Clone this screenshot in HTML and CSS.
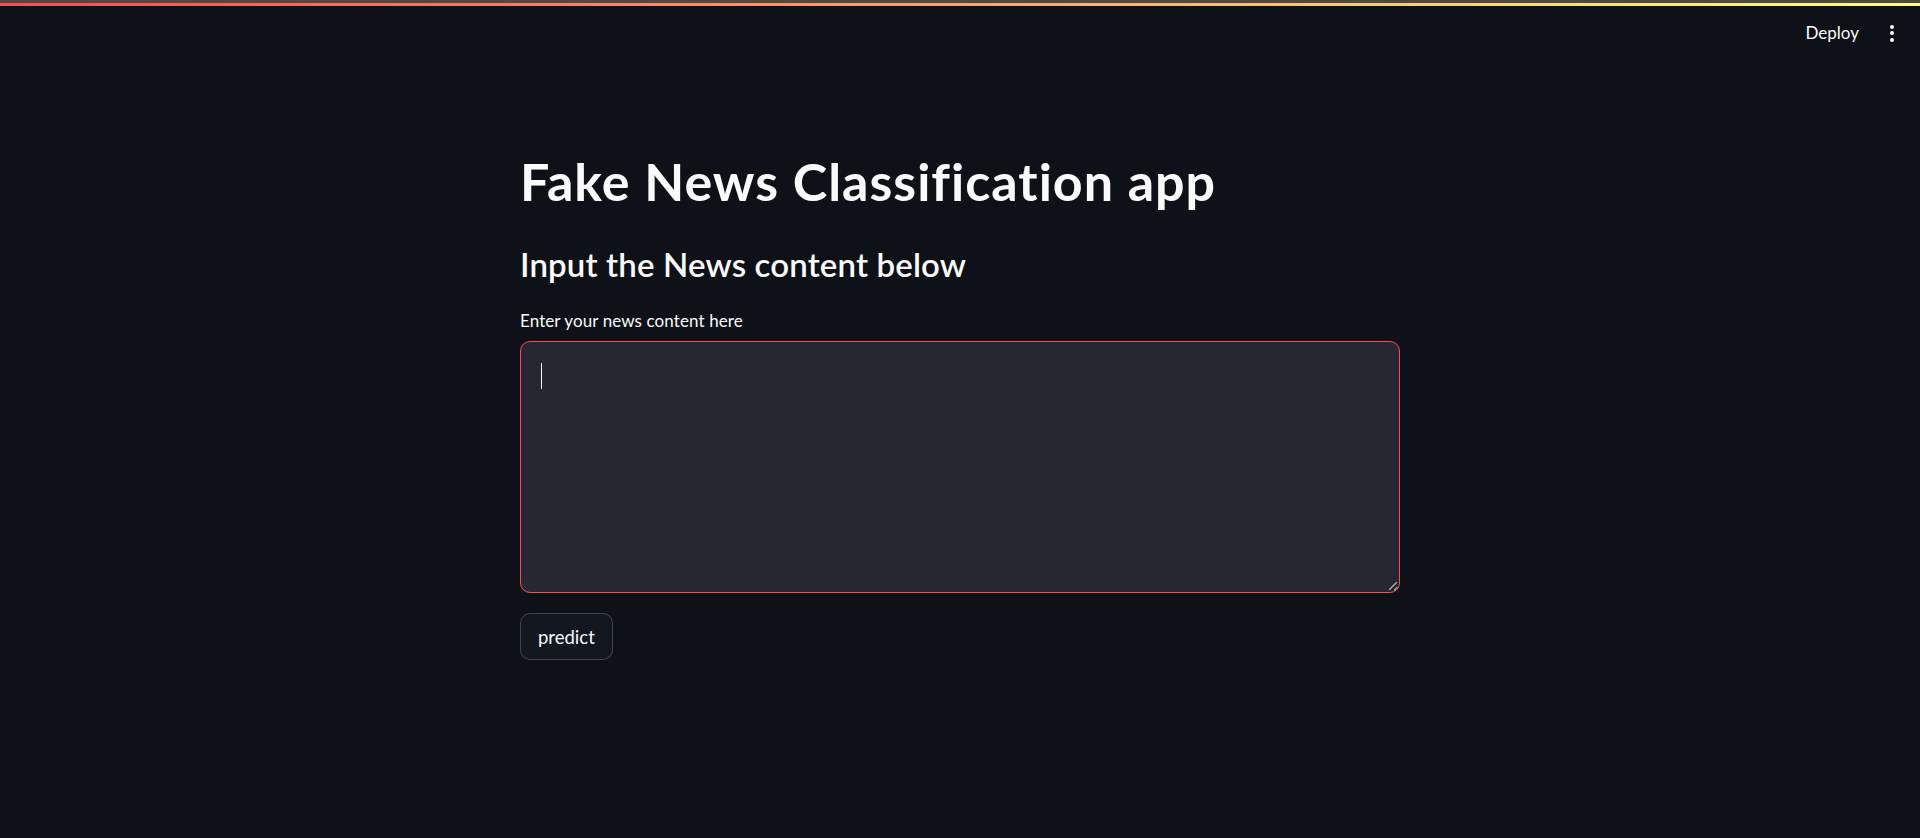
FILE: index.html
```html
<!DOCTYPE html>
<html lang="en">
<head>
<meta charset="utf-8">
<title>Fake News Classification app</title>
<link rel="stylesheet" href="styles.css">
</head>
<body>
  <div class="chrome-line"></div>
  <div class="decoration"></div>
  <header class="app-header">
    <span class="deploy">Deploy</span>
    <span class="menu" aria-label="Main menu">
      <i></i><i></i><i></i>
    </span>
  </header>
  <main class="block">
    <h1 class="title">Fake News Classification app</h1>
    <h3 class="subheader">Input the News content below</h3>
    <label class="field-label">Enter your news content here</label>
    <div class="textarea">
      <span class="caret"></span>
      <svg class="grip" width="12" height="12" viewBox="0 0 12 12">
        <path d="M10.5 3.5 L3.5 10.5" stroke="#1b1b1f" stroke-width="3.2" stroke-linecap="round"/>
        <path d="M10.5 3.5 L3.5 10.5" stroke="#a9a9ad" stroke-width="1.6" stroke-linecap="round"/>
        <path d="M11 8.5 L8.5 11" stroke="#a9a9ad" stroke-width="1.2" stroke-linecap="round"/>
      </svg>
    </div>
    <button class="btn">predict</button>
  </main>
</body>
</html>
```

FILE: styles.css
```css
html, body {
  margin: 0;
  padding: 0;
  background: #0e1117;
  color: #fafafa;
  font-family: "Source Sans Pro", Lato, "Noto Sans", sans-serif;
}

.chrome-line {
  height: 3px;
  background: #4a4a4a;
}

.decoration {
  height: 3px;
  background: linear-gradient(90deg, #ff4b4b, #fffd80);
}

.app-header {
  height: 60px;
  display: flex;
  justify-content: flex-end;
  align-items: flex-start;
  padding: 17px 26px 0 0;
  box-sizing: border-box;
  gap: 31px;
}

.deploy {
  font-size: 17px;
  line-height: 20px;
  color: #fafafa;
}

.menu {
  display: flex;
  flex-direction: column;
  gap: 2.3px;
  padding-top: 2px;
}

.menu i {
  display: block;
  width: 4px;
  height: 4px;
  border-radius: 50%;
  background: #fafafa;
}

.block {
  width: 880px;
  margin: 0 auto;
  padding-top: 85px;
}

.title {
  margin: 0;
  font-size: 52px;
  line-height: 60px;
  font-weight: 700;
  letter-spacing: 1px;
}

.subheader {
  margin: 34px 0 0;
  font-size: 33px;
  line-height: 38px;
  font-weight: 600;
  letter-spacing: 0.15px;
}

.field-label {
  display: block;
  margin-top: 28px;
  font-size: 17px;
  line-height: 20px;
  letter-spacing: 0.1px;
}

.textarea {
  position: relative;
  margin-top: 10px;
  height: 252px;
  box-sizing: border-box;
  border: 1px solid #ff4b4b;
  border-radius: 10px;
  background: #262730;
  padding: 21px 20px;
}

.caret {
  display: block;
  width: 1px;
  height: 26px;
  background: #fafafa;
}

.grip {
  position: absolute;
  right: 1px;
  bottom: 1px;
}

.btn {
  display: block;
  margin-top: 20px;
  height: 47px;
  padding: 0 17px;
  border: 1px solid rgba(250, 250, 250, 0.2);
  border-radius: 10px;
  background: #131720;
  color: #fafafa;
  font-family: inherit;
  font-size: 18.5px;
}
```
